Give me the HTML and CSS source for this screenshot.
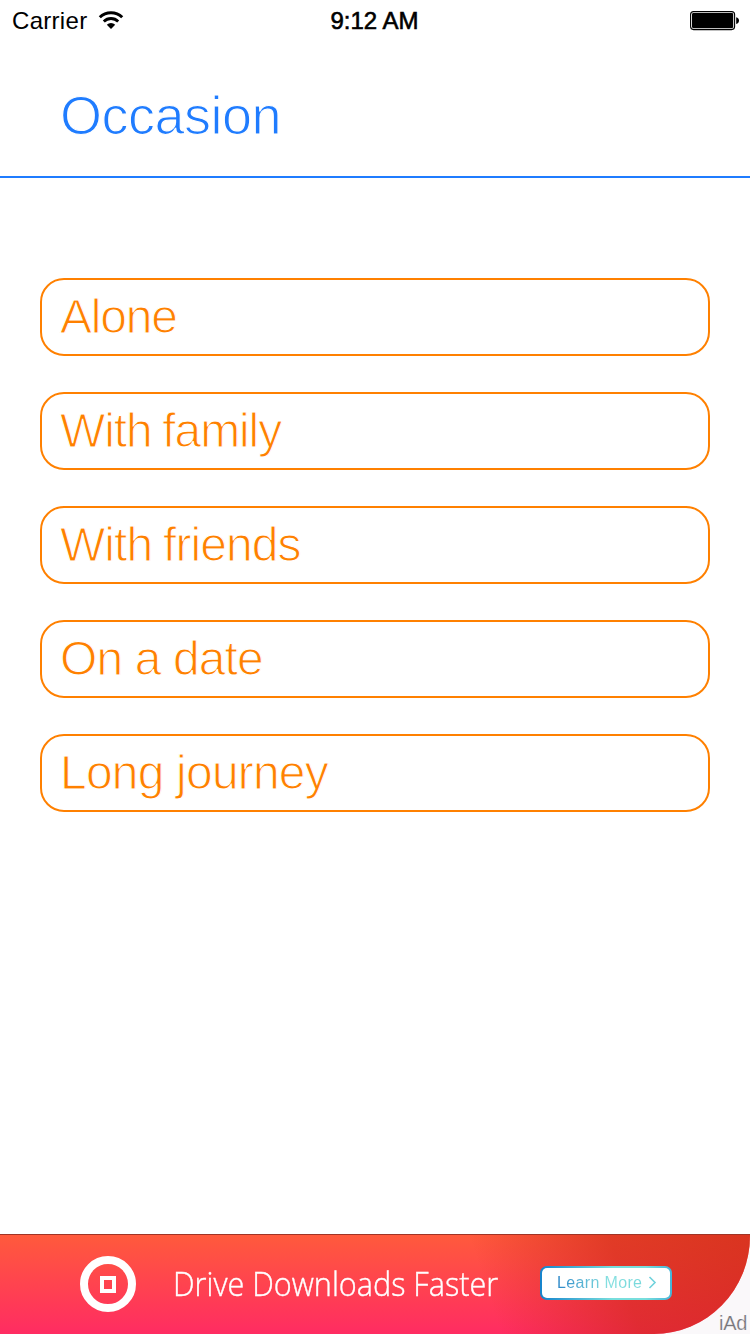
FILE: index.html
```html
<!DOCTYPE html>
<html lang="en">
<head>
<meta charset="utf-8">
<title>Occasion</title>
<link rel="stylesheet" href="styles.css">
</head>
<body>
<div class="screen">
  <div class="status">
    <div class="status-left">
      <span class="carrier">Carrier</span>
      <svg class="wifi" width="26" height="20" viewBox="0 0 26 20">
        <path d="M1.8 7.2A16 16 0 0 1 24.2 7.2" fill="none" stroke="#000" stroke-width="3"/>
        <path d="M5.8 11.5A10.2 10.2 0 0 1 20.2 11.5" fill="none" stroke="#000" stroke-width="2.8"/>
        <path d="M13 19L8.8 14.8A6 6 0 0 1 17.2 14.8Z" fill="#000"/>
      </svg>
    </div>
    <span class="time">9:12 AM</span>
    <div class="status-right">
      <svg width="50" height="20" viewBox="0 0 50 20">
        <rect x=".6" y=".6" width="44" height="18" rx="3" fill="#fff" stroke="#000" stroke-width="1.1"/>
        <rect x="2" y="2" width="41.2" height="15.2" rx="1.4" fill="#000"/>
        <path d="M46.2 6.2Q49 6.8 49 9.6T46.2 13Z" fill="#000"/>
      </svg>
    </div>
  </div>
  <header class="header"><h1 class="title">Occasion</h1></header>
  <main class="options">
    <button class="option alone">Alone</button>
    <button class="option family">With family</button>
    <button class="option friends">With friends</button>
    <button class="option date">On a date</button>
    <button class="option journey">Long journey</button>
  </main>
  <footer class="ad">
    <div class="ad-body">
      <svg class="ad-logo" width="56" height="56" viewBox="0 0 56 56" fill="none" stroke="#fff">
        <circle cx="28" cy="28" r="24" stroke-width="8"/>
        <rect x="22" y="22" width="12" height="13" stroke-width="4"/>
      </svg>
      <span class="ad-text">Drive Downloads Faster</span>
      <div class="learn">
        <span class="learn-inner"><span class="learn-text">Learn More</span>
          <svg width="9" height="13" viewBox="0 0 9 13"><path d="M1.5 1L7 6.5L1.5 12" fill="none" stroke="#70d2dc" stroke-width="1.6"/></svg>
        </span>
      </div>
    </div>
    <span class="iad">iAd</span>
  </footer>
</div>
</body>
</html>
```
FILE: styles.css
```css
* { box-sizing: border-box; }
body { margin: 0; font-family: "Liberation Sans", Arial, sans-serif; background: #fff; }
.screen { width: 750px; height: 1334px; display: flex; flex-direction: column; overflow: hidden; }
.status { height: 40px; display: grid; grid-template-columns: 1fr auto 1fr; align-items: center; padding: 2px 10px 0 12px; font-size: 24px; line-height: 38px; color: #000; }
.status-left { display: flex; align-items: center; gap: 10.5px; height: 38px; }
.carrier { letter-spacing: .3px; }
.wifi { margin-bottom: 2px; }
.time { -webkit-text-stroke: .6px #000; margin: 0 3px 0 0; }
.status-right { display: flex; justify-content: flex-end; }
.header { height: 138px; padding: 43px 60px 0; border-bottom: 2px solid #1f7cff; }
.title { margin: 0; font-size: 54px; line-height: 64px; font-weight: 400; color: #1f7cff; letter-spacing: -.5px; -webkit-text-stroke: 1.2px #fff; }
.options { flex: 1; padding: 100px 40px 0; display: flex; flex-direction: column; gap: 36px; }
.option { height: 78px; padding: 0 18px 1px; border: 2px solid #ff8000; border-radius: 24px; background: #fff; color: #ff8000; font: 400 48px/72px "Liberation Sans", Arial, sans-serif; text-align: left; -webkit-text-stroke: 1.1px #fff; }
.alone { letter-spacing: -1.2px; }
.family { letter-spacing: -1.1px; word-spacing: -1.5px; }
.friends { letter-spacing: -.95px; word-spacing: -1.5px; }
.date { letter-spacing: -.9px; }
.journey { letter-spacing: -.8px; }
.ad { height: 100px; position: relative; background: #faf8fa; }
.ad-body { height: 100px; display: flex; align-items: center; padding: 0 0 1px 80px; border-top: 1px solid #a03426; border-radius: 0 0 96px 0 / 0 0 98px 0; background: linear-gradient(72deg, rgba(205,40,22,0) 64%, rgba(205,40,22,.6) 82%, rgba(205,40,22,.75) 100%), linear-gradient(#ff5a3c, #ff2c62); }
.ad-logo { flex: none; }
.ad-text { width: 324px; margin: -3px 0 0 37px; color: #fff; font: 300 33.5px/44px "Open Sans", sans-serif; white-space: nowrap; transform: scaleX(.913); transform-origin: 0 50%; -webkit-text-stroke: .4px #fff; }
.learn { width: 132px; height: 34px; margin-left: 43px; margin-top: -3px; padding: 2px; border-radius: 7px; background: linear-gradient(90deg, #1583cc, #78dedd 55%, #78dedd 80%, #45b4d8); }
.learn-inner { height: 30px; display: flex; align-items: center; gap: 6px; padding-left: 15px; border-radius: 5px; background: #fff; }
.learn-text { font-size: 16px; letter-spacing: .35px; line-height: 30px; white-space: nowrap; color: transparent; background: linear-gradient(90deg, #2a86c8, #86e0e0 60%, #78d8dc); -webkit-background-clip: text; background-clip: text; }
.iad { position: absolute; right: 3px; bottom: 1px; font-size: 20px; line-height: 20px; color: #77757a; letter-spacing: -.3px; -webkit-text-stroke: .2px #faf8fa; }
```
